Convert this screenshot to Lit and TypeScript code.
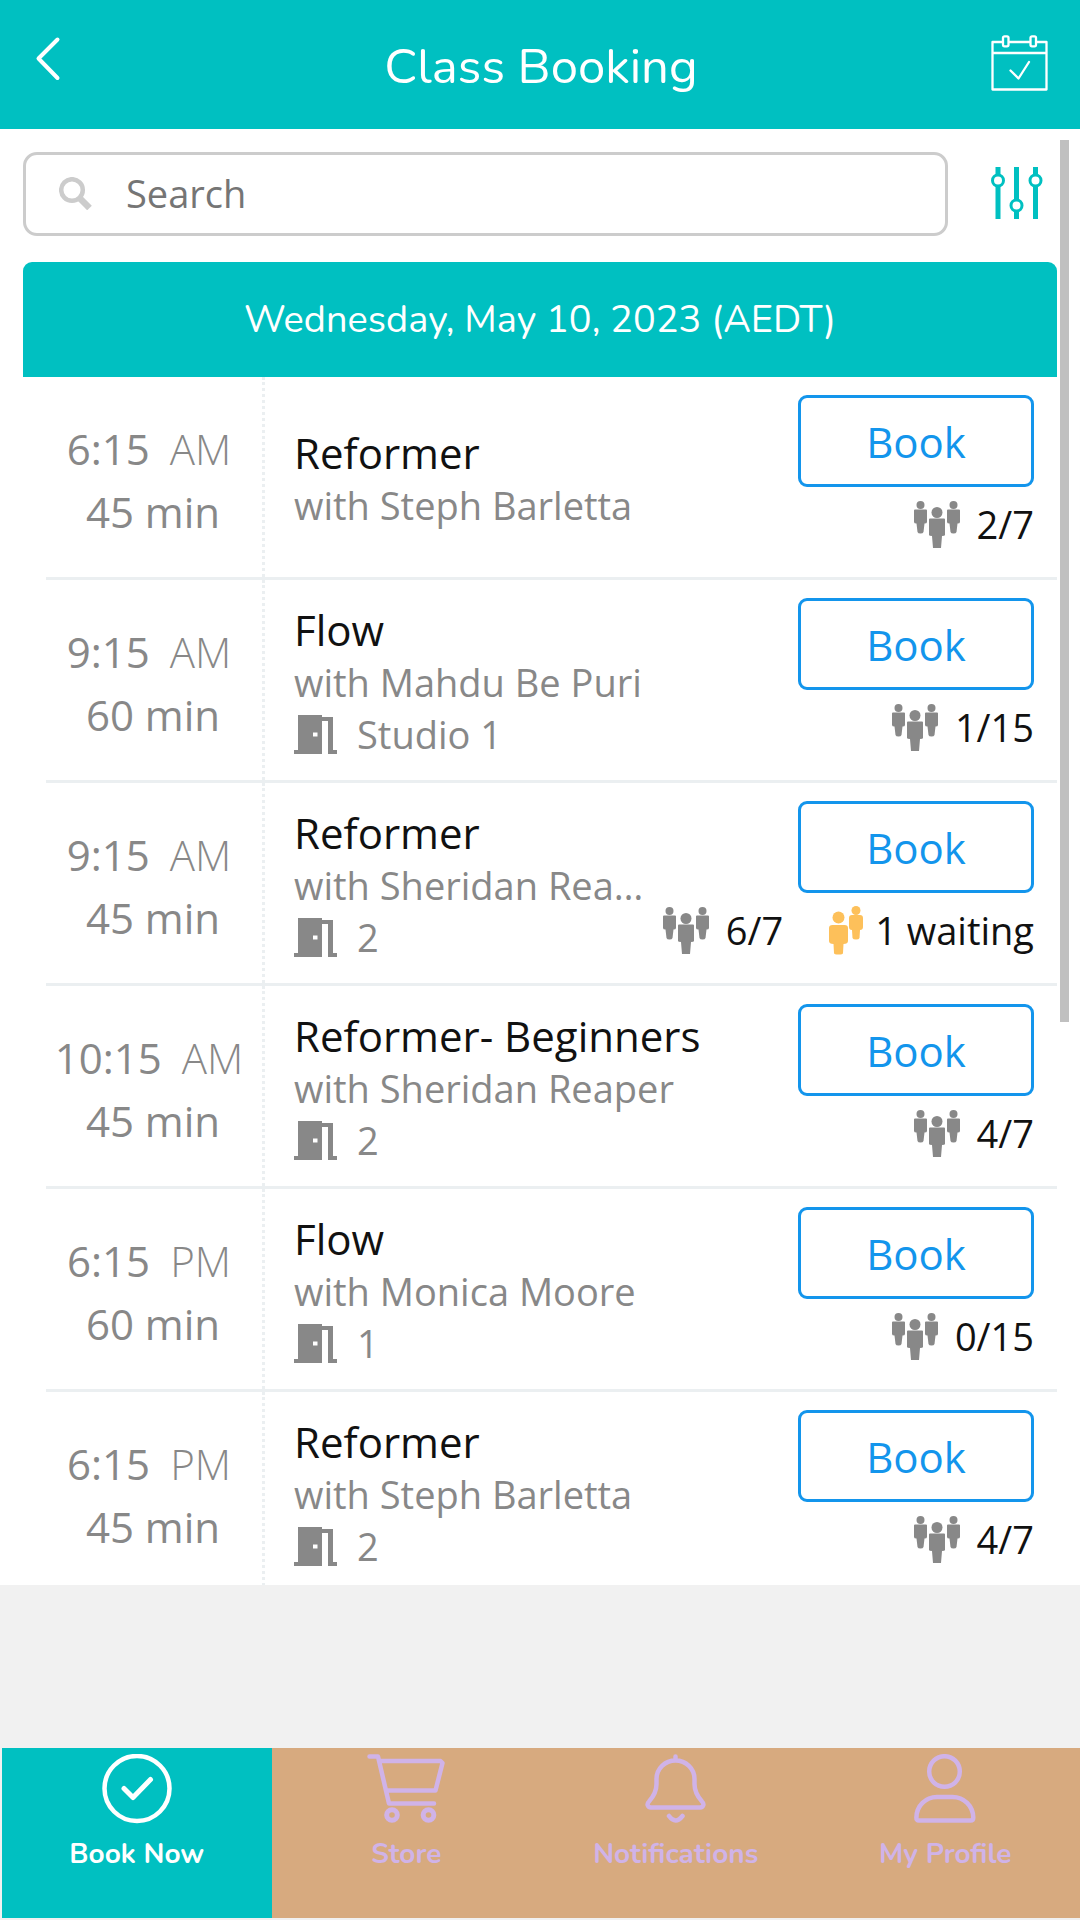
import { LitElement, html, css, svg, nothing } from "lit";
import { customElement, property } from "lit/decorators.js";

interface Session {
  time: string;
  period: "AM" | "PM";
  minutes: number;
  name: string;
  teacher: string;
  room?: string;
  spots: string;
  waiting?: number;
}

const SESSIONS: Session[] = [
  { time: "6:15", period: "AM", minutes: 45, name: "Reformer", teacher: "Steph Barletta", spots: "2/7" },
  { time: "9:15", period: "AM", minutes: 60, name: "Flow", teacher: "Mahdu Be Puri", room: "Studio 1", spots: "1/15" },
  { time: "9:15", period: "AM", minutes: 45, name: "Reformer", teacher: "Sheridan Reaper", room: "2", spots: "6/7", waiting: 1 },
  { time: "10:15", period: "AM", minutes: 45, name: "Reformer- Beginners", teacher: "Sheridan Reaper", room: "2", spots: "4/7" },
  { time: "6:15", period: "PM", minutes: 60, name: "Flow", teacher: "Monica Moore", room: "1", spots: "0/15" },
  { time: "6:15", period: "PM", minutes: 45, name: "Reformer", teacher: "Steph Barletta", room: "2", spots: "4/7" },
];

const doorIcon = html`<svg class="door" viewBox="0 0 43 39" width="43" height="39" aria-hidden="true">
  <path fill="currentColor" fill-rule="evenodd" d="M4 0H28V2H39V35H43V39H34V6H28V39H0V35H4ZM19 17.5V21.5H23.500V17.500Z" />
</svg>`;

const peopleIcon = html`<svg class="people" viewBox="0 0 46 47" width="46" height="47" aria-hidden="true">
  <g fill="currentColor">
    <circle cx="6.500" cy="4" r="4" />
    <path d="M1 8.500H12Q13 8.500 13 9.500V21Q13 22.500 10.500 22.500L9.500 31Q9 32.500 6.500 32.500T3.500 31L2.500 22.500Q0 22.500 0 21V9.500Q0 8.500 1 8.500Z" />
    <circle cx="39.500" cy="4" r="4" />
    <path d="M34 8.500H45Q46 8.500 46 9.500V21Q46 22.500 43.500 22.500L42.500 31Q42 32.500 39.500 32.500T36.500 31L35.500 22.500Q33 22.500 33 21V9.500Q33 8.500 34 8.500Z" />
    <circle cx="23" cy="11.500" r="5.500" />
    <path d="M16 17.500H30Q31 17.500 31 18.500V34Q31 35 28 35L27 47H19L18 35Q15 35 15 34V18.500Q15 17.500 16 17.500Z" />
  </g>
</svg>`;

const waitingIcon = html`<svg class="waiting" viewBox="0 0 35 49" width="35" height="49" aria-hidden="true">
  <g fill="currentColor">
    <circle cx="27" cy="4.500" r="4.500" />
    <path d="M23 9H31Q34 9 34 12V21Q34 24 31 24L30.500 32Q30 33.500 27 33.500T23.500 32L23 24Q20 24 20 21V12Q20 9 23 9Z" />
    <circle cx="9.500" cy="11.500" r="6" />
    <path d="M3.500 19H15.500Q19 19 19 22V35Q19 38 14.500 38L14 47Q14 48.500 9.500 48.500T5 47L4.500 38Q0 38 0 35V22Q0 19 3.500 19Z" />
  </g>
</svg>`;

@customElement("class-row")
class ClassRow extends LitElement {
  @property({ attribute: false }) session!: Session;

  static styles = css`
    :host {
      display: flex;
      flex: none;
      box-sizing: border-box;
      min-height: 203px;
      margin-left: 23px;
      border-bottom: 3px solid #ebeff1;
      color: #888;
    }
    .when {
      box-sizing: border-box;
      flex: none;
      width: 219px;
      padding: 6px 10px 0 0;
      border-right: 3px dotted #ebeff1;
      display: flex;
      flex-direction: column;
      align-items: center;
      justify-content: center;
      font-size: 42px;
      line-height: 63px;
      white-space: nowrap;
    }
    .period {
      font-weight: 300;
      margin-left: 20px;
    }
    .length {
      margin-left: 8px;
    }
    .what {
      flex: 1;
      min-width: 0;
      padding: 4px 0 0 29px;
      display: flex;
      flex-direction: column;
      justify-content: center;
      font-size: 38px;
      line-height: 52px;
    }
    .name {
      margin: 0;
      font-size: 42px;
      font-weight: 400;
      color: #111;
      white-space: nowrap;
    }
    .teacher {
      overflow: hidden;
      text-overflow: ellipsis;
      white-space: nowrap;
    }
    .room {
      display: flex;
      align-items: center;
      gap: 20px;
    }
    .side {
      flex: none;
      padding: 18px 23px 0 14px;
      display: flex;
      flex-direction: column;
      align-items: flex-end;
      gap: 12px;
      color: #111;
      font-size: 38px;
      line-height: 50px;
    }
    .book {
      box-sizing: border-box;
      width: 236px;
      height: 92px;
      border: 3px solid #1395ec;
      border-radius: 9px;
      background: #fff;
      color: #1395ec;
      font: inherit;
      font-size: 42px;
      padding: 2px 0 0;
    }
    .counts {
      display: flex;
      gap: 46px;
    }
    .count {
      display: flex;
      align-items: center;
      gap: 17px;
    }
    .count.queue {
      gap: 11px;
    }
    .people {
      color: #888;
    }
    .waiting {
      color: #fdc05a;
    }
    svg {
      display: block;
      flex: none;
    }
  `;

  render() {
    const s = this.session;
    return html`
      <div class="when">
        <div>${s.time}<span class="period">${s.period}</span></div>
        <div class="length">${s.minutes} min</div>
      </div>
      <div class="what">
        <h3 class="name">${s.name}</h3>
        <div class="teacher">with ${s.teacher}</div>
        ${s.room ? html`<div class="room">${doorIcon}<span>${s.room}</span></div>` : nothing}
      </div>
      <div class="side">
        <button class="book" type="button">Book</button>
        <div class="counts">
          <div class="count">${peopleIcon}<span>${s.spots}</span></div>
          ${s.waiting
            ? html`<div class="count queue">${waitingIcon}<span>${s.waiting} waiting</span></div>`
            : nothing}
        </div>
      </div>
    `;
  }
}

const TABS = [
  {
    label: "Book Now",
    width: 70,
    icon: svg`<circle cx="35" cy="34.500" r="32.500" /><path d="M22 34.500L31 43.500L48.500 25.500" stroke-width="5" />`,
  },
  {
    label: "Store",
    width: 78,
    icon: svg`<path d="M2.500 2.500H11L22 49.500H67M12.500 7H73.500L75.500 9L68.500 36.500H19.500" /><circle cx="25" cy="61" r="5.300" stroke-width="5" /><circle cx="61.500" cy="61" r="5.300" stroke-width="5" />`,
  },
  {
    label: "Notifications",
    width: 62,
    icon: svg`<path d="M30.500 2.500V6.500C20 6.500 11.500 14.500 11.500 25V30C11.500 37 9 42 4 47.500C1.500 50 2.500 53.500 6 53.500H55C58.500 53.500 59.500 50 57 47.500C52 42 49.500 37 49.500 30V25C49.500 14.500 41 6.500 30.500 6.500M24 62Q30.500 71 37.500 62" />`,
  },
  {
    label: "My Profile",
    width: 62,
    icon: svg`<circle cx="30.500" cy="17.500" r="15.300" /><path d="M23 43H38.500C50 43 59 52 59.300 63.500Q59.300 66.500 56.500 66.500H5Q2.300 66.500 2.400 63.500C2.600 52 11.500 43 23 43Z" />`,
  },
];

@customElement("app-root")
class AppRoot extends LitElement {
  static styles = css`
    :host {
      display: flex;
      flex-direction: column;
      height: 100vh;
      background: #fff;
      font-family: "Open Sans", "Noto Sans", sans-serif;
    }
    svg {
      display: block;
      flex: none;
    }
    .icon-button {
      border: 0;
      padding: 0;
      background: none;
      color: inherit;
    }
    .top {
      box-sizing: border-box;
      flex: none;
      height: 129px;
      padding: 35px 32px 0 34px;
      display: grid;
      grid-template-columns: 1fr auto 1fr;
      align-items: start;
      background: #00c0c1;
      color: #fff;
    }
    .top .end {
      justify-self: end;
    }
    .top .start {
      justify-self: start;
    }
    .title {
      margin: 0;
      font-family: Nunito, "Open Sans", sans-serif;
      font-size: 49px;
      line-height: 63px;
      font-weight: 400;
    }
    .viewport {
      position: relative;
      flex: 1;
      min-height: 0;
      display: flex;
    }
    .scroller {
      flex: 1;
      min-width: 0;
      padding: 23px 23px 0;
      display: flex;
      flex-direction: column;
      overflow-y: auto;
      scrollbar-width: none;
    }
    .thumb {
      position: absolute;
      top: 11px;
      right: 11px;
      width: 9px;
      height: 882px;
      background: #c0c0c0;
    }
    .tools {
      flex: none;
      display: flex;
      align-items: center;
      gap: 43px;
      padding-right: 14px;
    }
    .search {
      box-sizing: border-box;
      flex: 1;
      height: 84px;
      padding: 0 33px 2px;
      display: flex;
      align-items: center;
      gap: 34px;
      border: 3px solid #ccc;
      border-radius: 14px;
      color: #ccc;
    }
    .field {
      flex: 1;
      min-width: 0;
      border: 0;
      padding: 0;
      outline: 0;
      background: none;
      color: #111;
      font: inherit;
      font-size: 38px;
      line-height: 52px;
    }
    .field::placeholder {
      color: #757575;
      opacity: 1;
    }
    .filter {
      padding-bottom: 2px;
      color: #00c0c1;
    }
    .day {
      flex: none;
      margin: 26px 0 0;
      border-radius: 9px 9px 0 0;
      background: #00c0c1;
      color: #fff;
      font-family: Nunito, "Open Sans", sans-serif;
      font-size: 38px;
      font-weight: 400;
      line-height: 115px;
      text-align: center;
    }
    .gap {
      flex: none;
      height: 163px;
      background: #f1f1f1;
    }
    .tabs {
      flex: none;
      display: grid;
      grid-template-columns: repeat(4, 1fr);
      height: 170px;
      padding: 0 0 2px 2px;
      background: #f1f1f1;
      font-family: Nunito, "Open Sans", sans-serif;
      font-size: 28px;
      font-weight: 700;
      line-height: 36px;
    }
    .tab {
      padding-top: 6px;
      display: flex;
      flex-direction: column;
      align-items: center;
      gap: 12px;
      background: #d7aa7f;
      color: #d0b3e8;
      text-decoration: none;
      white-space: nowrap;
    }
    .tab[aria-current] {
      background: #00c0c1;
      color: #fff;
    }
  `;

  render() {
    return html`
      <header class="top">
        <button class="icon-button start" type="button" aria-label="Back">
          <svg viewBox="0 0 28 47" width="28" height="47" fill="none" stroke="currentColor" stroke-width="4" stroke-linecap="round" stroke-linejoin="round">
            <path d="M23.500 4.500L4.500 23.500L23.500 43" />
          </svg>
        </button>
        <h1 class="title">Class Booking</h1>
        <button class="icon-button end" type="button" aria-label="My bookings">
          <svg viewBox="0 0 57 56" width="57" height="56" fill="none" stroke="currentColor" stroke-width="2.300" stroke-linecap="round" stroke-linejoin="round">
            <path d="M11 7H1.500V54.500H55.500V7H46M18.500 7H38.500M1.500 18H55.500M19.500 35.500L27.500 43.500L38 27" />
            <rect x="12" y="1.300" width="5.500" height="10" rx="1.500" />
            <rect x="39.500" y="1.300" width="5.500" height="10" rx="1.500" />
          </svg>
        </button>
      </header>
      <main class="viewport">
        <div class="scroller">
          <div class="tools">
            <label class="search">
              <svg viewBox="0 0 33 33" width="33" height="33" fill="none" stroke="currentColor" aria-hidden="true">
                <circle cx="13" cy="13" r="10.800" stroke-width="4.500" />
                <path d="M20 20.500L30.500 31" stroke-width="6.500" />
              </svg>
              <input class="field" type="text" placeholder="Search" aria-label="Search" />
            </label>
            <button class="icon-button filter" type="button" aria-label="Filter">
              <svg viewBox="0 0 52 52" width="52" height="52" stroke="currentColor">
                <path d="M7 0V52M25.500 0V52M44.500 0V52" stroke-width="5" />
                <g fill="#fff" stroke-width="3">
                  <circle cx="7" cy="13.500" r="5.500" />
                  <circle cx="25.500" cy="38.500" r="5.500" />
                  <circle cx="44.500" cy="13.500" r="5.500" />
                </g>
              </svg>
            </button>
          </div>
          <h2 class="day">Wednesday, May 10, 2023 (AEDT)</h2>
          ${SESSIONS.map((s) => html`<class-row .session=${s}></class-row>`)}
        </div>
        <div class="thumb"></div>
      </main>
      <div class="gap"></div>
      <nav class="tabs">
        ${TABS.map(
          (t, i) => html`<a class="tab" href="#" aria-current=${i === 0 ? "page" : nothing}>
            <svg viewBox="0 0 ${t.width} 70" width=${t.width} height="70" fill="none" stroke="currentColor" stroke-width="4.500" stroke-linecap="round" stroke-linejoin="round" aria-hidden="true">${t.icon}</svg>
            <span>${t.label}</span>
          </a>`,
        )}
      </nav>
    `;
  }
}
